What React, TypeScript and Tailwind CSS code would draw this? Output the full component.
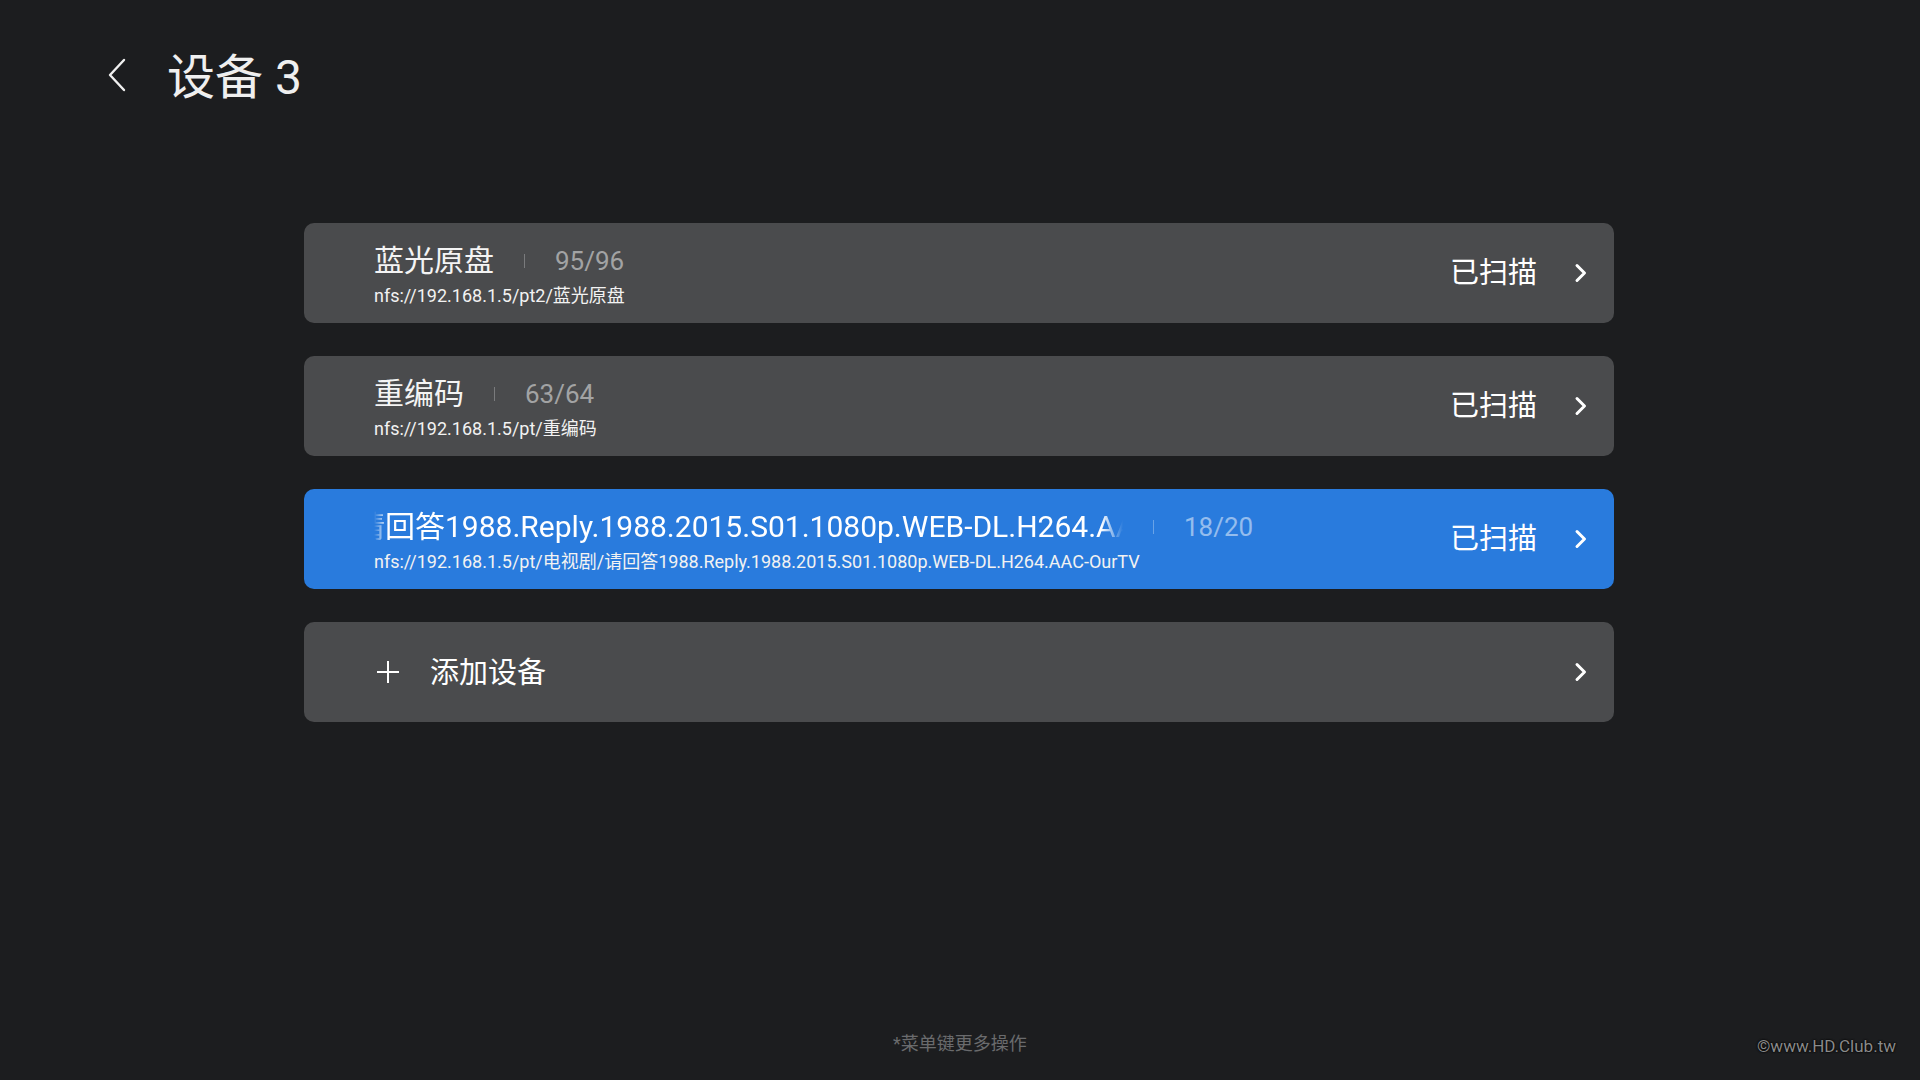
import React from "react";

const FONT = { fontFamily: 'Roboto, "Noto Sans CJK SC", "Noto Sans", sans-serif' };

function ChevronRight() {
  return (
    <svg width="14" height="20" viewBox="0 0 14 20" className="shrink-0">
      <polyline points="3,2.5 10.5,10 3,17.5" fill="none" stroke="#ffffff" strokeWidth="3" strokeLinecap="round" strokeLinejoin="round" />
    </svg>
  );
}

type Item = { title: string; count: string; path: string; active?: boolean; marquee?: boolean };

const items: Item[] = [
  { title: "蓝光原盘", count: "95/96", path: "nfs://192.168.1.5/pt2/蓝光原盘" },
  { title: "重编码", count: "63/64", path: "nfs://192.168.1.5/pt/重编码" },
  {
    title: "请回答1988.Reply.1988.2015.S01.1080p.WEB-DL.H264.AAC-OurTV",
    count: "18/20",
    path: "nfs://192.168.1.5/pt/电视剧/请回答1988.Reply.1988.2015.S01.1080p.WEB-DL.H264.AAC-OurTV",
    active: true,
    marquee: true,
  },
];

function Card({ item }: { item: Item }) {
  return (
    <div
      className={`h-[100px] rounded-[10px] flex items-center pl-[70px] pr-[26px] ${
        item.active ? "bg-[#297bdd]" : "bg-[#4a4b4d]"
      }`}
    >
      <div className="flex-1 min-w-0 flex flex-col pt-[3px]">
        <div className="flex items-center h-[36px]">
          {item.marquee ? (
            <div className="w-[749px] overflow-hidden [mask-image:linear-gradient(to_right,transparent,black_14px,black_calc(100%-22px),transparent)]">
              <div className="whitespace-nowrap text-[30px] leading-[36px] text-white -translate-x-[19px]">
                {item.title}
              </div>
            </div>
          ) : (
            <div className="whitespace-nowrap text-[30px] leading-[36px] text-[#f4f4f4]">{item.title}</div>
          )}
          <div className={`mx-[30px] w-px h-[14px] ${item.active ? "bg-white/30" : "bg-[#7a7b7d]"}`} />
          <div
            className={`text-[26px] leading-[36px] ${item.active ? "text-white/50" : "text-[#a2a3a4]"}`}
          >
            {item.count}
          </div>
        </div>
        <div className="mt-[6px] text-[18px] leading-[22px] text-[#f2f2f2] whitespace-nowrap">{item.path}</div>
      </div>
      <div className="text-[29px] leading-[36px] text-white mr-[37px]">已扫描</div>
      <ChevronRight />
    </div>
  );
}

export default function App() {
  return (
    <div className="w-full h-screen bg-[#1c1d1f] relative flex flex-col overflow-hidden" style={FONT}>
      <div className="h-[150px] flex items-center pl-[106px] shrink-0">
        <svg width="22" height="34" viewBox="0 0 22 34">
          <polyline points="18,2 4,17 18,32" fill="none" stroke="#f0f0f0" strokeWidth="2.4" strokeLinecap="round" strokeLinejoin="round" />
        </svg>
        <div className="ml-[39px] mt-[5px] text-[48px] leading-[56px] text-[#efefef]">设备 3</div>
      </div>
      <div className="mt-[73px] ml-[304px] w-[1310px] flex flex-col gap-[33px]">
        {items.map((it, i) => (
          <Card key={i} item={it} />
        ))}
        <div className="h-[100px] rounded-[10px] bg-[#4a4b4d] flex items-center pl-[72px] pr-[26px]">
          <svg width="24" height="24" viewBox="0 0 24 24" className="shrink-0">
            <line x1="12" y1="1" x2="12" y2="23" stroke="#ffffff" strokeWidth="2" />
            <line x1="1" y1="12" x2="23" y2="12" stroke="#ffffff" strokeWidth="2" />
          </svg>
          <div className="ml-[30px] flex-1 text-[29px] leading-[36px] text-white pt-[2px]">添加设备</div>
          <ChevronRight />
        </div>
      </div>
      <div className="flex-1" />
      <div className="pb-[24px] text-center text-[18px] leading-[24px] text-[#6a6b6d]">*菜单键更多操作</div>
      <div
        className="absolute right-[24px] bottom-[23px] text-[17px] leading-[22px] text-[#8a8a8a]"
        style={{ fontFamily: 'Roboto, "Liberation Sans", sans-serif', textShadow: "0 0 2px #000, 0 0 2px #000" }}
      >
        ©www.HD.Club.tw
      </div>
    </div>
  );
}
